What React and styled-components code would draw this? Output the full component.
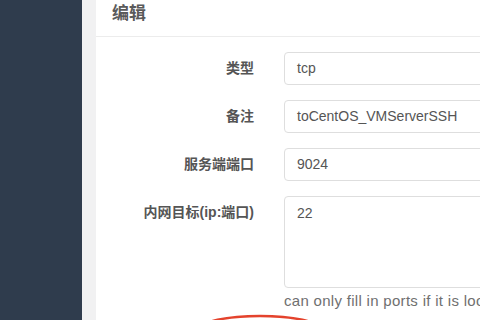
import React from "react";
import styled, { createGlobalStyle } from "styled-components";

const Global = createGlobalStyle`
  html, body { margin: 0; padding: 0; }
  body {
    width: 480px;
    height: 320px;
    overflow: hidden;
    background: #f1f1f2;
    font-family: "Liberation Sans", "Noto Sans CJK SC", sans-serif;
  }
`;

const Page = styled.div`
  position: relative;
  display: flex;
  width: 480px;
  height: 320px;
  overflow: hidden;
`;

const Sidebar = styled.aside`
  flex: 0 0 82px;
  background: #2f3c4d;
`;

const Main = styled.main`
  flex: 1;
  min-width: 0;
  padding-left: 14px;
  background: #f1f1f2;
`;

const Panel = styled.section`
  height: 100%;
  background: #ffffff;
  overflow: hidden;
`;

const PanelHeader = styled.header`
  box-sizing: border-box;
  height: 37px;
  padding: 4px 0 0 16px;
  border-bottom: 1px solid #ececec;
  font-size: 17px;
  line-height: 20px;
  font-weight: 600;
  color: #5a5a5a;
`;

const Form = styled.form`
  display: grid;
  grid-template-columns: 158px 320px;
  column-gap: 30px;
  row-gap: 15px;
  padding-top: 15px;
`;

const Label = styled.label`
  text-align: right;
  font-size: 14px;
  font-weight: 600;
  color: #555;
  line-height: 33px;
  white-space: nowrap;
  align-self: ${(p) => (p.$top ? "start" : "center")};
`;

const Field = styled.div`
  display: flex;
  flex-direction: column;
`;

const Input = styled.div`
  box-sizing: border-box;
  height: 33px;
  padding: 0 12px;
  border: 1px solid #dedede;
  border-radius: 4px;
  font-size: 14px;
  line-height: 31px;
  color: #555;
`;

const TextArea = styled.div`
  box-sizing: border-box;
  height: 92px;
  padding: 6px 12px;
  border: 1px solid #dedede;
  border-radius: 4px;
  font-size: 14px;
  line-height: 20px;
  color: #555;
`;

const Help = styled.div`
  margin-top: 3px;
  font-size: 15px;
  letter-spacing: 0.3px;
  line-height: 20px;
  color: #6f6f6f;
  white-space: nowrap;
`;

const Annotation = styled.svg`
  position: absolute;
  left: 190px;
  top: 308px;
  width: 140px;
  height: 40px;
  pointer-events: none;
`;

export default function App() {
  return (
    <>
      <Global />
      <Page>
        <Sidebar />
        <Main>
          <Panel>
            <PanelHeader>编辑</PanelHeader>
            <Form>
              <Label>类型</Label>
              <Input>tcp</Input>
              <Label>备注</Label>
              <Input>toCentOS_VMServerSSH</Input>
              <Label>服务端端口</Label>
              <Input>9024</Input>
              <Label $top>内网目标(ip:端口)</Label>
              <Field>
                <TextArea>22</TextArea>
                <Help>can only fill in ports if it is local machine proxy</Help>
              </Field>
            </Form>
          </Panel>
        </Main>
        <Annotation viewBox="0 0 140 40">
          <ellipse cx="70" cy="21" rx="60" ry="13" fill="none" stroke="#e4432d" strokeWidth="2.5" />
        </Annotation>
      </Page>
    </>
  );
}
